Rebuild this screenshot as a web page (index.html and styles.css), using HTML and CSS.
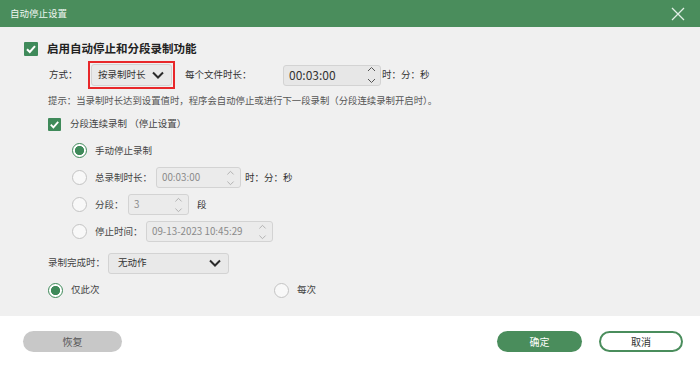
FILE: index.html
```html
<!DOCTYPE html>
<html lang="zh-CN">
<head>
  <meta charset="UTF-8" />
  <title>自动停止设置</title>
  <link rel="stylesheet" href="styles.css">
</head>
<body>
  <div class="dialog">
    <div class="titlebar">
      <span class="title">自动停止设置</span>
      <button class="close">
        <svg width="14" height="14" viewBox="0 0 14 14"><path d="M1 1L13 13M13 1L1 13" /></svg>
      </button>
    </div>

    <div class="content">
      <div class="row row-main">
        <span class="checkbox"><svg width="14" height="14" viewBox="0 0 14 14"><polyline points="3,7.2 5.8,10 11,4.2" /></svg></span>
        <span class="main-label">启用自动停止和分段录制功能</span>
      </div>

      <div class="row row-method">
        <span class="lbl lbl-method">方式：</span>
        <span class="highlight">
          <span class="select select-method">按录制时长
            <svg class="chev" width="12" height="8" viewBox="0 0 12 8"><polyline points="1,1.5 6,6.5 11,1.5" /></svg>
          </span>
        </span>
        <span class="lbl lbl-file">每个文件时长：</span>
        <span class="spin spin-file">00:03:00
          <svg class="arrows" width="9" height="18" viewBox="0 0 9 18"><polyline points="1,5 4.5,1.5 8,5" /><polyline points="1,13 4.5,16.5 8,13" /></svg>
        </span>
        <span class="unit">时：分：秒</span>
      </div>

      <p class="hint">提示：当录制时长达到设置值时，程序会自动停止或进行下一段录制（分段连续录制开启时）。</p>

      <div class="row row-sub">
        <span class="checkbox small"><svg width="13" height="13" viewBox="0 0 14 14"><polyline points="3,7.2 5.8,10 11,4.2" /></svg></span>
        <span class="sub-label">分段连续录制 （停止设置）</span>
      </div>

      <div class="options">
        <div class="row opt">
          <span class="radio on"></span>
          <span class="opt-label">手动停止录制</span>
        </div>
        <div class="row opt">
          <span class="radio"></span>
          <span class="opt-label lbl-total">总录制时长：</span>
          <span class="spin off spin-total">00:03:00
            <svg class="arrows" width="9" height="16" viewBox="0 0 9 18"><polyline points="1,5 4.5,1.5 8,5" /><polyline points="1,13 4.5,16.5 8,13" /></svg>
          </span>
          <span class="unit unit-total">时：分：秒</span>
        </div>
        <div class="row opt">
          <span class="radio"></span>
          <span class="opt-label lbl-parts">分段：</span>
          <span class="spin off spin-parts">3
            <svg class="arrows" width="9" height="16" viewBox="0 0 9 18"><polyline points="1,5 4.5,1.5 8,5" /><polyline points="1,13 4.5,16.5 8,13" /></svg>
          </span>
          <span class="unit unit-parts">段</span>
        </div>
        <div class="row opt">
          <span class="radio"></span>
          <span class="opt-label lbl-time">停止时间：</span>
          <span class="spin off spin-time">09-13-2023 10:45:29
            <svg class="arrows" width="9" height="16" viewBox="0 0 9 18"><polyline points="1,5 4.5,1.5 8,5" /><polyline points="1,13 4.5,16.5 8,13" /></svg>
          </span>
        </div>
      </div>

      <div class="row row-finish">
        <span class="lbl lbl-finish">录制完成时：</span>
        <span class="select select-finish">无动作
          <svg class="chev" width="12" height="8" viewBox="0 0 12 8"><polyline points="1,1.5 6,6.5 11,1.5" /></svg>
        </span>
      </div>

      <div class="row row-scope">
        <div class="scope-item first">
          <span class="radio on"></span>
          <span class="opt-label">仅此次</span>
        </div>
        <div class="scope-item">
          <span class="radio"></span>
          <span class="opt-label">每次</span>
        </div>
      </div>
    </div>

    <div class="footer">
      <button class="btn btn-reset">恢复</button>
      <button class="btn btn-ok">确定</button>
      <button class="btn btn-cancel">取消</button>
    </div>
  </div>
</body>
</html>
```

FILE: styles.css
```css
:root {
  --green: #4a8d5c;
  --check: #3f8a5a;
  --body-bg: #f0f0f0;
  --text: #333;
}

body {
  margin: 0;
  font-family: "Noto Sans CJK SC", "Noto Sans", sans-serif;
  color: var(--text);
  background: #fff;
}

.dialog {
  width: 700px;
  height: 368px;
  overflow: hidden;
}

.titlebar {
  height: 27px;
  background: var(--green);
  display: flex;
  align-items: center;
  justify-content: space-between;
  padding: 0 15px 0 10px;
}

.title {
  color: #eef5f0;
  font-size: 9.5px;
  line-height: 1;
}

.close {
  border: none;
  background: none;
  padding: 0;
  display: flex;
}

.close path {
  stroke: #e2efe6;
  stroke-width: 1.3;
  fill: none;
}

.content {
  height: 280px;
  padding-top: 9px;
  background: var(--body-bg);
}

.row {
  display: flex;
  align-items: center;
  font-size: 9.5px;
  line-height: 1;
}

.row-main {
  height: 25px;
  padding-left: 24px;
}

.checkbox {
  width: 14px;
  height: 14px;
  background: var(--check);
  border-radius: 1px;
  display: flex;
  align-items: center;
  justify-content: center;
  margin-right: 9px;
}

.checkbox.small {
  width: 13px;
  height: 13px;
}

.checkbox polyline {
  fill: none;
  stroke: #fff;
  stroke-width: 2;
}

.main-label {
  font-size: 11.5px;
  font-weight: bold;
  color: #222;
}

.row-method {
  height: 28px;
  padding-left: 49px;
}

.lbl-method { width: 39px; }
.lbl-file { width: 98px; margin-left: 10px; }

.highlight {
  border: 2px solid #e8272a;
  padding: 1px;
  display: flex;
}

.select {
  box-sizing: border-box;
  display: flex;
  align-items: center;
  justify-content: space-between;
  background: #e9e9e9;
  border: 1px solid #d3d3d3;
  border-radius: 3px;
  color: #333;
}

.select-method {
  width: 81px;
  height: 22px;
  padding: 0 7px 0 6px;
}

.chev polyline {
  fill: none;
  stroke: #2b2b2b;
  stroke-width: 2;
}

.spin {
  box-sizing: border-box;
  display: flex;
  align-items: center;
  justify-content: space-between;
  background: #e7e7e7;
  border: 1px solid #d3d3d3;
  border-radius: 3px;
  color: #333;
}

.spin-file {
  width: 98px;
  height: 21px;
  padding: 0 4px 0 5px;
  font-size: 12px;
}

.arrows polyline {
  fill: none;
  stroke: #555;
  stroke-width: 1;
}

.spin.off {
  background: #ebebeb;
  color: #8a8a8a;
  font-size: 9.8px;
  height: 21px;
  padding: 0 5px 0 5px;
}

.spin.off .arrows polyline {
  stroke: #aaa;
}

.unit {
  margin-left: 1px;
}

.hint {
  margin: 0;
  height: 22px;
  line-height: 22px;
  padding-left: 48px;
  font-size: 9.4px;
  color: #555;
}

.row-sub {
  height: 26px;
  padding-left: 48px;
}

.sub-label {
  color: #444;
}

.opt {
  height: 27px;
  padding-left: 72px;
}

.radio {
  box-sizing: border-box;
  width: 15px;
  height: 15px;
  border-radius: 50%;
  border: 1px solid #c3c3c3;
  background: #f8f8f8;
  margin-right: 8px;
  flex-shrink: 0;
}

.radio.on {
  border-color: var(--check);
  background: radial-gradient(circle, var(--check) 0 4.3px, #fff 4.9px);
}

.opt-label {
  color: #444;
}

.lbl-total { width: 61px; }
.lbl-parts { width: 33px; }
.lbl-time { width: 51px; }

.spin-total { width: 85px; }
.spin-parts { width: 61px; }
.spin-time { width: 127px; }

.unit-total { margin-left: 4px; }
.unit-parts { margin-left: 8px; }

.row-finish {
  height: 22px;
  margin-top: 7px;
  padding-left: 48px;
}

.lbl-finish { width: 60px; color: #444; }

.select-finish {
  width: 121px;
  height: 21px;
  padding: 0 7px 0 9px;
}

.row-scope {
  height: 24px;
  margin-top: 4px;
  padding-left: 48px;
}

.scope-item {
  display: flex;
  align-items: center;
}

.scope-item.first {
  width: 226px;
}

.footer {
  height: 52px;
  box-sizing: border-box;
  padding: 15px 17px 0 23px;
  display: flex;
  align-items: flex-start;
  background: #fff;
}

.btn {
  box-sizing: border-box;
  height: 21px;
  border-radius: 11px;
  border: none;
  font-family: inherit;
  font-size: 10px;
  line-height: 1;
  padding: 0;
}

.btn-reset {
  width: 99px;
  background: #c8c8c8;
  color: #555;
  margin-right: auto;
}

.btn-ok {
  width: 85px;
  background: var(--green);
  color: #fff;
  margin-right: 17px;
}

.btn-cancel {
  width: 84px;
  background: #fff;
  border: 2px solid var(--green);
  color: #333;
}
```
